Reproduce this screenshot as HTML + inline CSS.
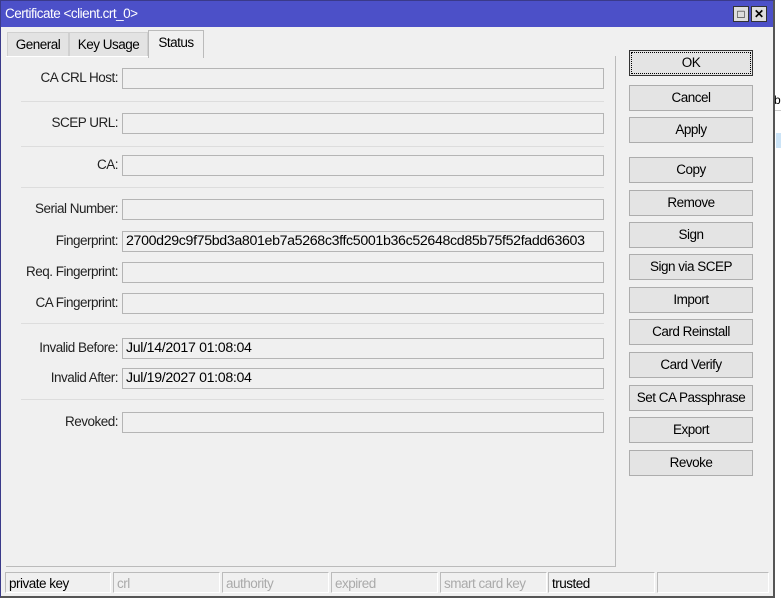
<!DOCTYPE html><html><head><style>
body{margin:0;width:781px;height:605px;background:#fff;position:relative;overflow:hidden;font-family:"Liberation Sans",sans-serif;font-size:13.5px;color:#000;letter-spacing:-.5px}
.win{position:absolute;left:0;top:0;width:772px;height:595px;background:#f0f0f0;border:1px solid #3a3a8a;border-right:2px solid #555;border-bottom:2px solid #555}
.title{position:absolute;left:0;top:0;right:0;height:26px;background:#4c50c8;color:#fff;line-height:26px;padding-left:4px;font-size:13.5px}
.tb{position:absolute;top:5px;width:14px;height:14px;background:#ddd;border:1px solid #333;color:#000;font-size:12px;line-height:14px;text-align:center;font-weight:bold;letter-spacing:0}
.tab{position:absolute;top:31px;height:24px;line-height:24px;text-align:center;background:#e3e3e3;border:1px solid #d0d0d0;border-bottom:none}
.panel{position:absolute;left:5px;top:55px;width:609px;height:510px;border-right:1px solid #bbb;border-bottom:1px solid #bbb}
.lbl{position:absolute;right:655px;width:125px;text-align:right;height:20px;line-height:20px;color:#222;white-space:nowrap}
.inp{position:absolute;left:121px;width:477px;height:19px;border:1px solid #b5b5b5;background:#f0f0f0;line-height:19px;padding-left:3px;box-sizing:content-box;font-size:14.2px;letter-spacing:-.35px;white-space:nowrap;overflow:hidden}
.sep{position:absolute;left:20px;width:583px;height:1px;background:#ddd}
.btn{position:absolute;left:628px;width:122px;height:24px;border:1px solid #adadad;background:#e4e4e4;text-align:center;line-height:24px}
.sb{position:absolute;top:571px;height:21px;border:1px solid #bbb;border-right-color:#fff;border-bottom-color:#fff;line-height:21px;padding-left:3px;color:#aaa;box-sizing:border-box}
</style></head><body>
<div style="position:absolute;left:774px;top:93px;font-size:12px">b</div>
<div style="position:absolute;left:775px;top:110px;width:6px;height:1px;background:#ccc"></div>
<div style="position:absolute;left:776px;top:133px;width:5px;height:15px;background:#cce4f7"></div>
<div class="win">
<div class="title">Certificate &lt;client.crt_0&gt;</div>
<div class="tb" style="left:732px">□</div><div class="tb" style="left:750px">✕</div>
<div class="tab" style="left:6px;width:60px">General</div>
<div class="tab" style="left:68px;width:77px">Key Usage</div>
<div class="tab" style="left:147px;width:54px;background:#f0f0f0;top:29px;height:27px;border-color:#bbb">Status</div>
<div style="position:absolute;left:5px;top:55px;width:142px;height:1px;background:#fff"></div>
<div class="panel"></div>

<div class="lbl" style="top:67px">CA CRL Host:</div><div class="inp" style="top:67px"></div>
<div class="sep" style="top:100px"></div>
<div class="lbl" style="top:112px">SCEP URL:</div><div class="inp" style="top:112px"></div>
<div class="sep" style="top:145px"></div>
<div class="lbl" style="top:154px">CA:</div><div class="inp" style="top:154px"></div>
<div class="sep" style="top:186px"></div>
<div class="lbl" style="top:198px">Serial Number:</div><div class="inp" style="top:198px"></div>
<div class="lbl" style="top:230px">Fingerprint:</div><div class="inp" style="top:230px">2700d29c9f75bd3a801eb7a5268c3ffc5001b36c52648cd85b75f52fadd63603</div>
<div class="lbl" style="top:261px">Req. Fingerprint:</div><div class="inp" style="top:261px"></div>
<div class="lbl" style="top:292px">CA Fingerprint:</div><div class="inp" style="top:292px"></div>
<div class="sep" style="top:322px"></div>
<div class="lbl" style="top:337px">Invalid Before:</div><div class="inp" style="top:337px">Jul/14/2017 01:08:04</div>
<div class="lbl" style="top:367px">Invalid After:</div><div class="inp" style="top:367px">Jul/19/2027 01:08:04</div>
<div class="sep" style="top:398px"></div>
<div class="lbl" style="top:411px">Revoked:</div><div class="inp" style="top:411px"></div>

<div class="btn" style="top:49px;border:1px solid #333;outline:1px dotted #000;outline-offset:-3px">OK</div>
<div class="btn" style="top:84px">Cancel</div>
<div class="btn" style="top:116px">Apply</div>
<div class="btn" style="top:156px">Copy</div>
<div class="btn" style="top:189px">Remove</div>
<div class="btn" style="top:221px">Sign</div>
<div class="btn" style="top:253px">Sign via SCEP</div>
<div class="btn" style="top:286px">Import</div>
<div class="btn" style="top:318px">Card Reinstall</div>
<div class="btn" style="top:351px">Card Verify</div>
<div class="btn" style="top:384px">Set CA Passphrase</div>
<div class="btn" style="top:416px">Export</div>
<div class="btn" style="top:449px">Revoke</div>

<div class="sb" style="left:4px;width:106px;color:#000">private key</div>
<div class="sb" style="left:112px;width:107px">crl</div>
<div class="sb" style="left:221px;width:107px">authority</div>
<div class="sb" style="left:330px;width:107px">expired</div>
<div class="sb" style="left:439px;width:107px">smart card key</div>
<div class="sb" style="left:547px;width:107px;color:#000">trusted</div>
<div class="sb" style="left:656px;width:112px"></div>
</div>
</body></html>
